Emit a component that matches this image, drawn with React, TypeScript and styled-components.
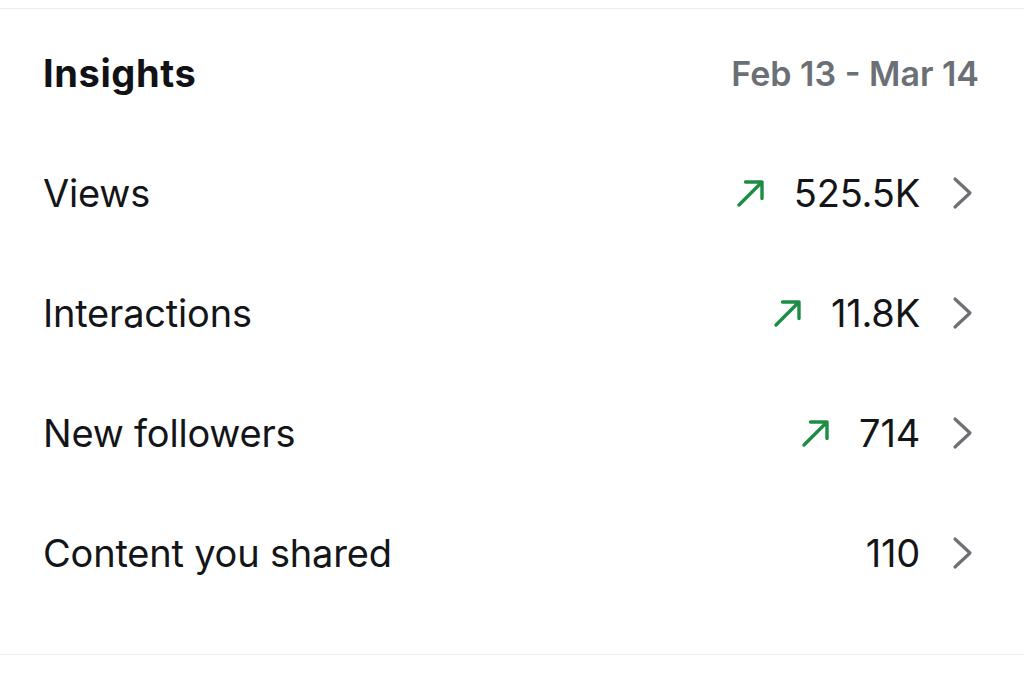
import React from 'react'
import styled, { createGlobalStyle } from 'styled-components'

const GlobalStyle = createGlobalStyle`
  html, body {
    margin: 0;
    padding: 0;
    background: #ffffff;
  }
  body {
    font-family: Inter, "Noto Sans", "Liberation Sans", sans-serif;
    -webkit-font-smoothing: antialiased;
  }
`

const Page = styled.div`
  padding-top: 8px;
  background: #ffffff;
`

const Card = styled.section`
  border-top: 1px solid #ececec;
  border-bottom: 1px solid #ececec;
  padding: 4px 50px 41px 43px;
  display: flex;
  flex-direction: column;
`

const Header = styled.div`
  height: 120px;
  display: flex;
  align-items: center;
  justify-content: space-between;
`

const Title = styled.h2`
  margin: 0;
  font-size: 38px;
  font-weight: 700;
  color: #111216;
  letter-spacing: 0.6px;
`

const DateRange = styled.span`
  font-size: 34px;
  font-weight: 600;
  color: #6b6f76;
  margin-right: -5px;
`

const Row = styled.div`
  height: 120px;
  display: flex;
  align-items: center;
  justify-content: space-between;
`

const Label = styled.span`
  font-size: 38px;
  font-weight: 400;
  color: #141518;
  letter-spacing: -0.2px;
`

const Right = styled.div`
  display: flex;
  align-items: center;
`

const TrendIcon = styled.svg`
  width: 30px;
  height: 30px;
  margin-right: 28px;
`

const Value = styled.span`
  font-size: 38px;
  font-weight: 400;
  color: #141518;
  letter-spacing: -0.2px;
`

const Chevron = styled.svg`
  width: 22px;
  height: 34px;
  margin-left: 32px;
`

interface Metric {
  label: string
  value: string
  up: boolean
}

const metrics: Metric[] = [
  { label: 'Views', value: '525.5K', up: true },
  { label: 'Interactions', value: '11.8K', up: true },
  { label: 'New followers', value: '714', up: true },
  { label: 'Content you shared', value: '110', up: false },
]

const Arrow = () => (
  <TrendIcon viewBox="0 0 30 30">
    <path d="M3 27 L26 4 M9.5 4 H26 V20.5" fill="none" stroke="#1e8c47" strokeWidth="3.4" strokeLinecap="round" strokeLinejoin="round" />
  </TrendIcon>
)

const ChevronRight = () => (
  <Chevron viewBox="0 0 22 34">
    <path d="M3 3 L18 17 L3 31" fill="none" stroke="#6e7076" strokeWidth="3.2" strokeLinecap="round" strokeLinejoin="round" />
  </Chevron>
)

export default function App() {
  return (
    <Page>
      <GlobalStyle />
      <Card>
        <Header>
          <Title>Insights</Title>
          <DateRange>Feb 13 - Mar 14</DateRange>
        </Header>
        {metrics.map((m) => (
          <Row key={m.label}>
            <Label>{m.label}</Label>
            <Right>
              {m.up && <Arrow />}
              <Value>{m.value}</Value>
              <ChevronRight />
            </Right>
          </Row>
        ))}
      </Card>
    </Page>
  )
}
